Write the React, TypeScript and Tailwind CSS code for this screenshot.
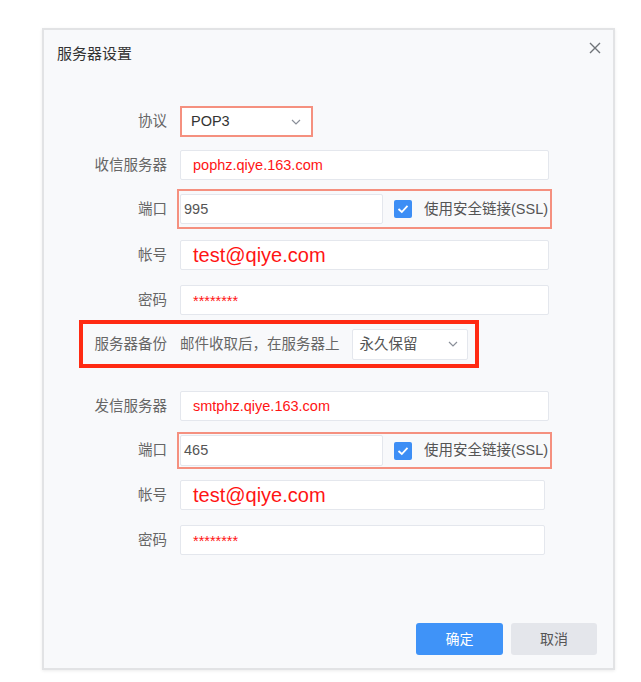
import React from "react";

const font = "font-['Liberation_Sans','Noto_Sans_CJK_SC',sans-serif]";

function Chevron() {
  return (
    <svg width="10" height="6" viewBox="0 0 10 6" className="shrink-0">
      <path d="M1 1 L5 5 L9 1" fill="none" stroke="#8a8f99" strokeWidth="1.2" />
    </svg>
  );
}

function Label({ children }: { children: React.ReactNode }) {
  return (
    <div className="w-[123px] shrink-0 text-right text-[14.5px] leading-none text-[#666]">{children}</div>
  );
}

function TextBox({ children, w, big, pwd }: { children: React.ReactNode; w: string; big?: boolean; pwd?: boolean }) {
  return (
    <div
      className={`${w} h-[30px] ml-[13px] bg-white border border-[#e4e7ed] rounded-[2px] flex items-center pl-[12px] text-[#ff1414] leading-none ${
        big ? "text-[20px]" : pwd ? "text-[14.5px] pt-[3px]" : "text-[14.5px]"
      }`}
    >
      {children}
    </div>
  );
}

function Check() {
  return (
    <div className="w-[18px] h-[18px] rounded-[2px] bg-[#3d8ef5] flex items-center justify-center shrink-0">
      <svg width="12" height="10" viewBox="0 0 12 10">
        <path d="M1.5 5 L4.8 8 L10.5 1.8" fill="none" stroke="#fff" strokeWidth="1.8" />
      </svg>
    </div>
  );
}

function PortRow({ value, boxClass, inputClass }: { value: string; boxClass: string; inputClass: string }) {
  return (
    <div className="flex items-center">
      <Label>端口</Label>
      <div className={`ml-[10px] w-[375px] border-2 border-[#f5907f] flex items-center ${boxClass}`}>
        <div className={`w-[203px] ml-[1px] bg-white border border-[#e4e7ed] rounded-[2px] flex items-center pl-[3px] text-[14.5px] text-[#555] leading-none ${inputClass}`}>
          {value}
        </div>
        <div className="ml-[11px]">
          <Check />
        </div>
        <div className="ml-[12px] text-[14.5px] text-[#555] leading-none whitespace-nowrap">使用安全链接(SSL)</div>
      </div>
    </div>
  );
}

export default function App() {
  return (
    <div className={`w-[641px] h-[682px] bg-white pt-[28px] pl-[42px] ${font}`}>
      <div className="w-[573px] h-[642px] bg-[#f8f9fb] border-2 border-[#e2e3e5] shadow-[0_1px_3px_rgba(0,0,0,0.08)] flex flex-col">
        <div className="h-[46px] flex items-center justify-between pl-[13px] pr-[12px]">
          <div className="text-[15px] text-[#333] leading-none">服务器设置</div>
          <svg width="12" height="12" viewBox="0 0 12 12" className="-mt-[10px]">
            <path d="M1 1 L11 11 M11 1 L1 11" stroke="#6f7378" strokeWidth="1.4" />
          </svg>
        </div>

        <div className="flex flex-col">
          {/* 协议 */}
          <div className="flex items-center mt-[30px]">
            <Label>协议</Label>
            <div className="ml-[13px] w-[133px] h-[31px] bg-white border-2 border-[#f5907f] flex items-center justify-between pl-[9px] pr-[10px]">
              <span className="text-[14.5px] text-[#333] leading-none">POP3</span>
              <Chevron />
            </div>
          </div>

          {/* 收信服务器 */}
          <div className="flex items-center mt-[13px]">
            <Label>收信服务器</Label>
            <TextBox w="w-[369px]">pophz.qiye.163.com</TextBox>
          </div>

          <div className="mt-[9px]">
            <PortRow value="995" boxClass="h-[40px] py-[3px]" inputClass="h-[30px]" />
          </div>

          <div className="flex items-center mt-[11px]">
            <Label>帐号</Label>
            <TextBox w="w-[369px]" big>test@qiye.com</TextBox>
          </div>

          <div className="flex items-center mt-[15px]">
            <Label>密码</Label>
            <TextBox w="w-[369px]" pwd>********</TextBox>
          </div>

          {/* 服务器备份 */}
          <div className="mt-[5px] ml-[35px] w-[400px] h-[48px] border-4 border-[#ff2a12] flex items-center">
            <div className="w-[84px] shrink-0 text-right text-[14.5px] text-[#666] leading-none whitespace-nowrap">服务器备份</div>
            <div className="ml-[13px] text-[14.5px] text-[#666] leading-none whitespace-nowrap">邮件收取后，在服务器上</div>
            <div className="ml-[12px] w-[116px] h-[31px] bg-white border border-[#e4e7ed] rounded-[2px] flex items-center justify-between pl-[7px] pr-[9px]">
              <span className="text-[14.5px] text-[#555] leading-none">永久保留</span>
              <Chevron />
            </div>
          </div>

          {/* 发信服务器 */}
          <div className="flex items-center mt-[23px]">
            <Label>发信服务器</Label>
            <TextBox w="w-[369px]">smtphz.qiye.163.com</TextBox>
          </div>

          <div className="mt-[11px]">
            <PortRow value="465" boxClass="h-[37px] py-[1px]" inputClass="h-[31px]" />
          </div>

          <div className="flex items-center mt-[11px]">
            <Label>帐号</Label>
            <TextBox w="w-[365px]" big>test@qiye.com</TextBox>
          </div>

          <div className="flex items-center mt-[15px]">
            <Label>密码</Label>
            <TextBox w="w-[365px]" pwd>********</TextBox>
          </div>
        </div>

        <div className="mt-auto mb-[13px] flex justify-end gap-[8px] pr-[16px]">
          <div className="w-[87px] h-[32px] rounded-[3px] bg-[#3f93f8] text-white text-[14px] flex items-center justify-center leading-none">确定</div>
          <div className="w-[86px] h-[32px] rounded-[3px] bg-[#e4e6eb] text-[#555] text-[14px] flex items-center justify-center leading-none">取消</div>
        </div>
      </div>
    </div>
  );
}
